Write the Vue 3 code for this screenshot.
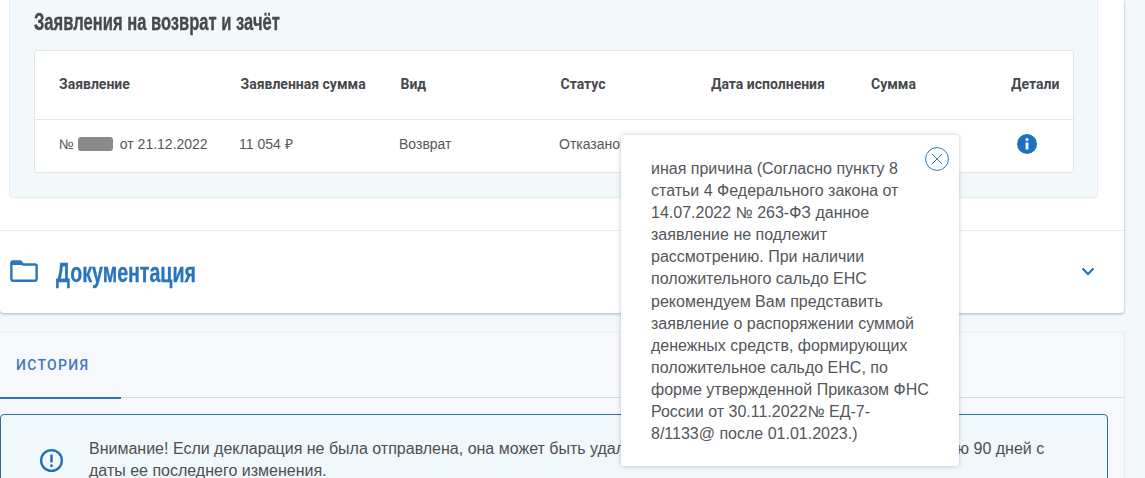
<script setup>
const heads = ['Заявление', 'Заявленная сумма', 'Вид', 'Статус', 'Дата исполнения', 'Сумма', 'Детали']
const lines = [
  'иная причина (Согласно пункту 8',
  'статьи 4 Федерального закона от',
  '14.07.2022 № 263-ФЗ данное',
  'заявление не подлежит',
  'рассмотрению. При наличии',
  'положительного сальдо ЕНС',
  'рекомендуем Вам представить',
  'заявление о распоряжении суммой',
  'денежных средств, формирующих',
  'положительное сальдо ЕНС, по',
  'форме утвержденной Приказом ФНС',
  'России от 30.11.2022№ ЕД-7-',
  '8/1133@ после 01.01.2023.)'
]
</script>

<template>
  <div class="page">
    <section class="card">
      <div class="panel">
        <h2 class="title"><span class="narrow">Заявления на возврат и зачёт</span></h2>
        <div class="table">
          <div class="row head">
            <div v-for="h in heads" :key="h" class="cell">{{ h }}</div>
          </div>
          <div class="row body">
            <div class="cell num">№ <span class="redact"></span> от 21.12.2022</div>
            <div class="cell">11 054 ₽</div>
            <div class="cell">Возврат</div>
            <div class="cell">Отказано</div>
            <div class="cell"></div>
            <div class="cell"></div>
            <div class="cell info-cell">
              <svg class="info" viewBox="0 0 20 20" width="20" height="20">
                <circle cx="10" cy="10" r="10" fill="#1b72c4" />
                <circle cx="10" cy="5.6" r="1.5" fill="#fff" />
                <rect x="8.6" y="8.4" width="2.8" height="7" rx=".4" fill="#fff" />
              </svg>
            </div>
          </div>
        </div>
      </div>
      <div class="docs">
        <svg class="folder" viewBox="0 0 28 22" width="28" height="22">
          <path d="M2.5 1.500h8l2.600 3H25a1.600 1.600 0 0 1 1.600 1.600v13A1.600 1.600 0 0 1 25 20.700H3A1.600 1.600 0 0 1 1.400 19.100V2.600a1.100 1.100 0 0 1 1.100-1.100z" fill="none" stroke="#2a74bd" stroke-width="2.400" />
          <path d="M2 2h8.500l2.400 3H2z" fill="#2a74bd" />
        </svg>
        <span class="docs-title"><span class="narrow">Документация</span></span>
        <svg class="chev" viewBox="0 0 14 9" width="14" height="9">
          <path d="M1.500 1.500 7 7l5.500-5.500" fill="none" stroke="#2a6fb5" stroke-width="2.200" />
        </svg>
      </div>
    </section>

    <section class="history">
      <div class="tabs">
        <div class="tab">ИСТОРИЯ</div>
      </div>
      <div class="alert">
        <svg class="warn" viewBox="0 0 26 26" width="25" height="25">
          <circle cx="13" cy="13" r="10.800" fill="none" stroke="#1f6fbd" stroke-width="2.400" />
          <rect x="11.700" y="6.800" width="2.600" height="8.400" rx=".6" fill="#1f6fbd" />
          <circle cx="13" cy="18.400" r="1.500" fill="#1f6fbd" />
        </svg>
        <p class="alert-text">Внимание! Если декларация не была отправлена, она может быть удалена из вашего перечня службой по истечению 90 дней с даты ее последнего изменения.</p>
      </div>
    </section>

    <aside class="pop">
      <button class="close" aria-label="Закрыть">
        <svg viewBox="0 0 24 24" width="24" height="24">
          <circle cx="12" cy="12" r="11.400" fill="#fff" stroke="#2a7ab8" stroke-width="1" />
          <path d="M6.800 6.800l10.400 10.400M17.200 6.800 6.800 17.200" stroke="#2a7ab8" stroke-width="1" fill="none" />
        </svg>
      </button>
      <div v-for="l in lines" :key="l" class="pop-line">{{ l }}</div>
    </aside>
  </div>
</template>

<style>
html, body { margin: 0; background: #f3f8fb; overflow: hidden; }
</style>

<style scoped>
.page {
  position: relative;
  width: 1145px;
  height: 478px;
  overflow: hidden;
  background: #f3f8fb;
  font-family: "Liberation Sans", Arial, sans-serif;
  color: #4a4a4a;
}
.card {
  width: 1124px;
  height: 313px;
  box-sizing: border-box;
  background: #fff;
  border-radius: 0 0 4px 4px;
  box-shadow: 0 1px 3px rgba(60, 80, 100, .4);
  display: flex;
  flex-direction: column;
}
.panel {
  width: 1089px;
  height: 198px;
  margin-left: 9px;
  box-sizing: border-box;
  background: #f3f8fb;
  border: 1px solid #e6edf2;
  border-top: 0;
  border-radius: 0 0 4px 4px;
  padding: 10px 24px 0;
}
.narrow {
  display: inline-block;
  transform-origin: 0 50%;
  white-space: nowrap;
  -webkit-text-stroke: .35px currentColor;
}
.title {
  margin: 0;
  font-family: "Liberation Sans", sans-serif;
  font-size: 23px;
  line-height: 25px;
  font-weight: 700;
  color: #46494d;
  height: 40px;
}
.title .narrow { transform: scaleX(.72); }
.table {
  width: 1040px;
  height: 123px;
  box-sizing: border-box;
  background: #fff;
  border: 1px solid #dfe5e9;
  border-radius: 3px;
}
.row {
  display: grid;
  padding-left: 24px;
  align-items: center;
  box-sizing: border-box;
}
.head {
  grid-template-columns: 181.500px 160px 160px 150.500px 160px 140px 1fr;
  height: 69px;
  padding-bottom: 2px;
  border-bottom: 1px solid #e3e8ec;
  font-family: Roboto, "Liberation Sans", sans-serif;
  font-size: 14px;
  font-weight: 700;
  color: #46494d;
}
.body {
  grid-template-columns: 180px 160px 160px 151px 160px 140px 1fr;
  height: 52px;
  padding-bottom: 4px;
  font-family: "Liberation Sans", sans-serif;
  font-size: 14px;
  line-height: 16px;
  color: #55585b;
}
.num {
  display: flex;
  align-items: center;
  white-space: pre;
}
.redact {
  display: inline-block;
  width: 35px;
  height: 14px;
  margin: 0 3px 0 0;
  background: #8a8a8a;
  border-radius: 3px;
  filter: blur(.6px);
}
.info-cell { display: flex; padding-left: 7px; }
.info { display: block; }
.docs {
  margin-top: 32px;
  flex: 1;
  border-top: 1px solid #e9edf0;
  display: flex;
  align-items: center;
  padding-left: 10px;
  padding-right: 29px;
  padding-bottom: 2px;
}
.docs-title {
  margin-left: 18px;
  padding-top: 3px;
  font-family: "Liberation Sans", sans-serif;
  font-size: 28px;
  font-weight: 700;
  color: #2a74bd;
}
.docs-title .narrow { transform: scaleX(.7); }
.chev { margin-left: auto; }
.history {
  margin-top: 19px;
  width: 1124px;
  height: 146px;
  background: #f6f8fb;
  border-top: 1px solid #eef1f4;
  box-shadow: 1px 0 1px #e6ebef;
}
.tabs {
  height: 65px;
  box-sizing: border-box;
  border-bottom: 1px solid #d5dce2;
  display: flex;
}
.tab {
  width: 121px;
  box-sizing: border-box;
  padding: 24px 0 0 16px;
  height: 66px;
  border-bottom: 2px solid #2a74bd;
  font-family: Roboto, "Liberation Sans", sans-serif;
  font-size: 14px;
  font-weight: 500;
  letter-spacing: 1.300px;
  color: #3f77bf;
}
.alert {
  margin-top: 16px;
  width: 1108px;
  height: 100px;
  box-sizing: border-box;
  background: #f0f8fc;
  border: 1px solid #2f7196;
  border-radius: 4px;
  display: flex;
  padding: 23px 40px 0 38px;
}
.warn { flex: none; margin-top: 10px; }
.alert-text {
  margin: 0 0 0 25px;
  font-family: "Liberation Sans", sans-serif;
  font-size: 16px;
  line-height: 22px;
  color: #4d4f52;
}
.pop {
  position: absolute;
  left: 621px;
  top: 135px;
  width: 338px;
  height: 331px;
  box-sizing: border-box;
  padding: 23px 0 0 30px;
  background: #fff;
  border-radius: 3px;
  box-shadow: 0 0 4px rgba(70, 80, 90, .35);
  font-family: "Liberation Sans", Arial, sans-serif;
  font-size: 16px;
  line-height: 22.100px;
  color: #54565a;
}
.pop-line { white-space: nowrap; }
.close {
  position: absolute;
  right: 10px;
  top: 12px;
  padding: 0;
  border: 0;
  background: none;
  width: 24px;
  height: 24px;
}
.close svg { display: block; }
</style>
